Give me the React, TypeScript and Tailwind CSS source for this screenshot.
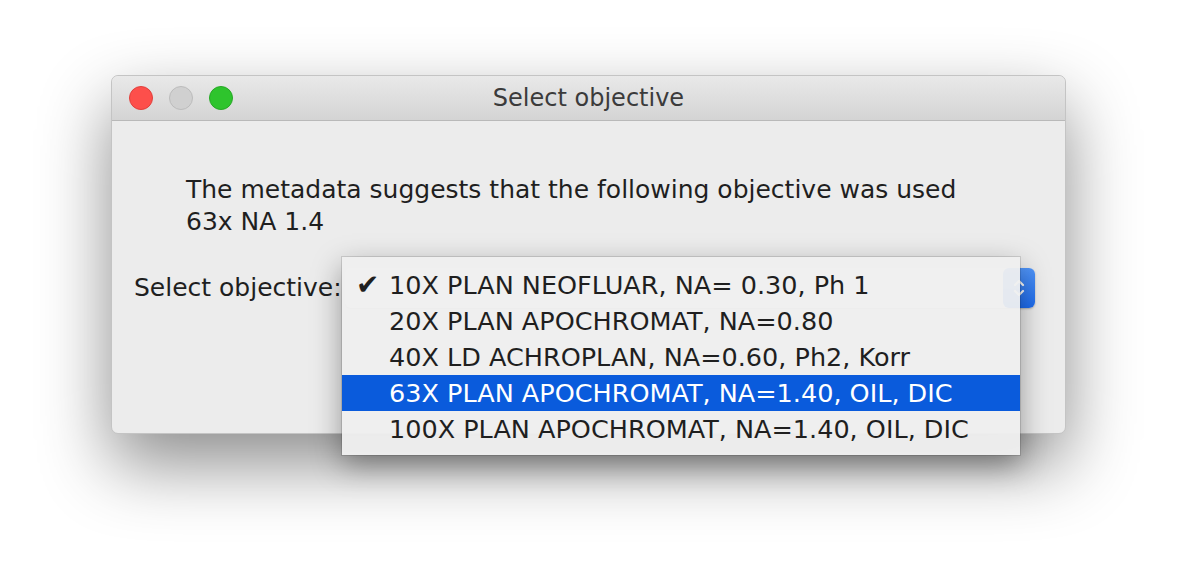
const objectives = [
  "10X PLAN NEOFLUAR, NA= 0.30, Ph 1",
  "20X PLAN APOCHROMAT, NA=0.80",
  "40X LD ACHROPLAN, NA=0.60, Ph2, Korr",
  "63X PLAN APOCHROMAT, NA=1.40, OIL, DIC",
  "100X PLAN APOCHROMAT, NA=1.40, OIL, DIC",
];

const font = "font-['DejaVu_Sans','Liberation_Sans',sans-serif]";

export default function App() {
  const checked = 0;
  const highlighted = 3;

  return (
    <div className={`w-[1178px] h-[582px] bg-white pt-[75px] pl-[111px] ${font}`}>
      {/* Dialog window */}
      <div className="relative w-[955px] h-[359px] rounded-[7px] bg-[#ececec] border border-[#c4c4c4] shadow-[0_30px_70px_rgba(0,0,0,0.45)]">
        {/* Title bar */}
        <div className="relative flex h-[45px] items-center justify-center rounded-t-[7px] border-b border-[#b9b9b9] bg-gradient-to-b from-[#e9e9e9] to-[#d4d4d4]">
          <div className="absolute left-[17px] top-[10px] flex gap-[16px]">
            <span className="h-[24px] w-[24px] rounded-full bg-[#fd4f4b] border border-[#e1403c]" />
            <span className="h-[24px] w-[24px] rounded-full bg-[#d0d0d0] border border-[#bcbcbc]" />
            <span className="h-[24px] w-[24px] rounded-full bg-[#2ec42d] border border-[#27a826]" />
          </div>
          <span className="text-[24px] text-[#3b3b3b]">Select objective</span>
        </div>

        {/* Body */}
        <div className="flex flex-col pt-[53px]">
          <div className="pl-[74px] text-[25px] leading-[32px] text-[#1f1f1f]">
            <p>The metadata suggests that the following objective was used</p>
            <p>63x NA 1.4</p>
          </div>
          <div className="mt-[30px] flex items-center pl-[22px]">
            <span className="text-[25px] text-[#1f1f1f]">Select objective:</span>
            <div className="ml-[3px] flex h-[40px] w-[690px] items-center justify-end rounded-[6px] bg-white shadow-[0_1px_2px_rgba(0,0,0,0.25)]">
              <div className="flex h-[40px] w-[32px] items-center justify-center rounded-[6px] bg-gradient-to-b from-[#4f94f8] to-[#1c6cf0]">
                <svg width="14" height="22" viewBox="0 0 14 22" fill="none" stroke="white" strokeWidth="2.2" strokeLinecap="round" strokeLinejoin="round">
                  <path d="M3 8l4-4 4 4" />
                  <path d="M3 14l4 4 4-4" />
                </svg>
              </div>
            </div>
          </div>
        </div>

        {/* Popup menu */}
        <div className="absolute left-[230px] top-[181px] w-[678px] bg-[#efefef]/95 pt-[10px] pb-[8px] shadow-[0_10px_28px_rgba(0,0,0,0.38),0_0_0_1px_rgba(0,0,0,0.12)]">
          {objectives.map((o, i) => (
            <div
              key={o}
              className={`flex h-[36px] items-center text-[25.5px] ${
                i === highlighted ? "bg-[#0a5bdc] text-white" : "text-[#1f1f1f]"
              }`}
            >
              <span className="w-[47px] pl-[14px] text-[28px] leading-none">
                {i === checked ? "✔" : ""}
              </span>
              <span>{o}</span>
            </div>
          ))}
        </div>
      </div>
    </div>
  );
}
